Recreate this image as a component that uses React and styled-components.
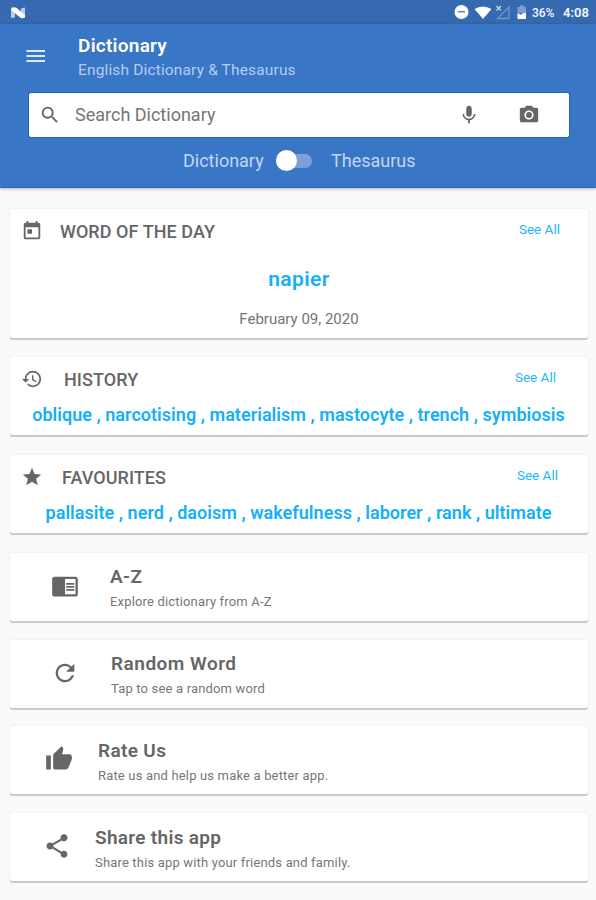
import React from "react";
import styled, { createGlobalStyle } from "styled-components";
import {
  MdSearch, MdMic, MdPhotoCamera, MdToday, MdHistory, MdStar,
  MdChromeReaderMode, MdRefresh, MdThumbUp, MdShare,
} from "react-icons/md";

const GlobalStyle = createGlobalStyle`
  * { box-sizing: border-box; }
  body { margin: 0; background: #fafafa; font-family: Roboto, sans-serif; color: #666; }
`;

const Screen = styled.div`
  width: 596px;
  height: 900px;
  overflow: hidden;
  background: #fafafa;
`;

const StatusBar = styled.div`
  height: 24px;
  padding: 2px 6px 0 11px;
  display: flex;
  align-items: center;
  justify-content: space-between;
  background: #356ab1;
  color: #f4f8fd;
`;

const StatusIcons = styled.div`
  display: flex;
  align-items: center;
  svg { display: block; flex: none; }
`;

const Battery = styled.span`
  margin-left: 5px;
  width: 24px;
  font-size: 12px;
  font-weight: 500;
  line-height: 14px;
  letter-spacing: -0.1px;
`;

const Clock = styled.span`
  margin-left: 7px;
  width: 27px;
  white-space: nowrap;
  font-size: 13px;
  font-weight: 600;
  line-height: 14px;
`;

const Header = styled.header`
  height: 164px;
  background: #3a76c6;
  box-shadow: 0 1px 3px rgba(0, 0, 0, 0.28);
  border-bottom: 1px solid #2c69bb;
`;

const TitleRow = styled.div`
  display: flex;
  height: 69px;
  padding-left: 26px;
`;

const MenuIcon = styled.svg`
  display: block;
  margin-top: 25px;
  width: 20px;
  height: 14px;
`;

const Titles = styled.div`
  margin: 11px 0 0 32px;
`;

const Title = styled.h1`
  margin: 0;
  font-size: 19px;
  line-height: 22px;
  font-weight: 600;
  color: #fff;
  letter-spacing: 0.25px;
`;

const Subtitle = styled.div`
  margin-top: 4px;
  font-size: 15.5px;
  line-height: 18px;
  color: #b4cdf0;
  letter-spacing: 0.15px;
`;

const SearchBox = styled.div`
  display: flex;
  align-items: center;
  width: 540px;
  height: 44px;
  margin-left: 29px;
  padding: 0 29px 0 10px;
  background: #fff;
  border-radius: 2px;
  box-shadow: 0 0 1px 1px #1f66bd;
  color: #666;
  svg { display: block; flex: none; }
`;

const Placeholder = styled.span`
  flex: 1;
  margin-left: 14px;
  font-size: 18px;
  line-height: 22px;
  color: #757575;
`;

const MicSlot = styled.span`
  margin-right: 38px;
`;

const ModeRow = styled.div`
  display: flex;
  align-items: center;
  height: 47px;
  padding-left: 183px;
  font-size: 18px;
  color: #c0d6f4;
`;

const ModeLabel = styled.span`
  width: ${(p) => p.$width}px;
  white-space: nowrap;
`;

const Switch = styled.span`
  display: flex;
  align-items: center;
  width: 36px;
  height: 14px;
  margin: 0 19px 0 12px;
  border-radius: 7px;
  background: #7f9fdb;
`;

const Thumb = styled.span`
  width: 21px;
  height: 21px;
  flex: none;
  border-radius: 50%;
  background: #fff;
`;

const CardList = styled.main`
  display: flex;
  flex-direction: column;
  padding: 21px 8px 0 10px;
`;

const Card = styled.section`
  height: ${(p) => p.$height}px;
  margin-bottom: ${(p) => p.$gap}px;
  border-radius: 2px;
  background: #fff;
  box-shadow: 0 2px 1px rgba(0, 0, 0, 0.19), 0 0 2px rgba(0, 0, 0, 0.1);
`;

const CardHead = styled.div`
  display: flex;
  height: 44px;
  padding: 11px ${(p) => p.$right}px 0 11px;
  svg { display: block; flex: none; }
`;

const CardTitle = styled.h2`
  flex: 1;
  margin: 1px 0 0 ${(p) => p.$left}px;
  font-size: 18px;
  line-height: 22px;
  font-weight: 500;
  letter-spacing: 0.06px;
`;

const SeeAll = styled.a`
  margin-top: 1px;
  font-size: 13.5px;
  line-height: 17px;
  color: #1eb5fa;
`;

const DailyWord = styled.div`
  margin-top: 13px;
  text-align: center;
  font-size: 21px;
  line-height: 26px;
  font-weight: 600;
  color: #14b0fa;
  letter-spacing: 0.4px;
`;

const DateText = styled.div`
  margin-top: 18px;
  text-align: center;
  font-size: 15px;
  line-height: 18px;
  color: #757575;
`;

const WordList = styled.div`
  margin-top: 3px;
  padding-right: 1px;
  text-align: center;
  white-space: nowrap;
  font-size: 18px;
  line-height: 22px;
  font-weight: 600;
  color: #14b0fa;
  letter-spacing: 0.035px;
`;

const ActionCard = styled(Card)`
  display: flex;
`;

const ActionIcon = styled.div`
  display: flex;
  align-items: center;
  justify-content: center;
  width: ${(p) => p.$center * 2}px;
  height: 66px;
  flex: none;
  svg { display: block; }
`;

const ActionText = styled.div`
  margin: ${(p) => p.$top}px 0 0 ${(p) => p.$left}px;
`;

const ActionTitle = styled.h2`
  margin: 0;
  font-size: 19px;
  line-height: 24px;
  font-weight: 600;
  letter-spacing: ${(p) => p.$spacing}px;
`;

const ActionNote = styled.div`
  margin-top: 4px;
  font-size: 13px;
  line-height: 18px;
  color: #777;
  letter-spacing: 0.17px;
`;

const lists = [
  { title: "HISTORY", Icon: MdHistory, left: 21, right: 32, gap: 20, words: "oblique , narcotising , materialism , mastocyte , trench , symbiosis" },
  { title: "FAVOURITES", Icon: MdStar, left: 19, right: 30, gap: 20, words: "pallasite , nerd , daoism , wakefulness , laborer , rank , ultimate" },
];

const actions = [
  { title: "A-Z", note: "Explore dictionary from A-Z", Icon: MdChromeReaderMode, center: 55, left: -10, top: 12, gap: 19, spacing: 0.4 },
  { title: "Random Word", note: "Tap to see a random word", Icon: MdRefresh, center: 55, left: -9, top: 12, gap: 18, spacing: 0.5 },
  { title: "Rate Us", note: "Rate us and help us make a better app.", Icon: MdThumbUp, center: 49, left: -10, top: 13, gap: 19, spacing: 0.35 },
  { title: "Share this app", note: "Share this app with your friends and family.", Icon: MdShare, center: 47, left: -9, top: 13, gap: 0, spacing: 0.3 },
];

export default function App() {
  return (
    <Screen>
      <GlobalStyle />
      <StatusBar>
        <svg width="15" height="12" viewBox="0 0 15 12">
          <path d="M0 1.500l4-1v10l-4 .5zM10 1.500l4-1v9.500l-4 1z" fill="#b7cdec" />
          <path d="M.5 .5h4.500l9 7.500v2.500l-3.500 1L.5 3.500z" fill="#fff" />
        </svg>
        <StatusIcons>
          <svg width="73" height="16" viewBox="0 0 73 16">
            <circle cx="7.500" cy="7" r="7" fill="#fff" />
            <path d="M4 6.700h7" stroke="#5c87c1" strokeWidth="1.600" />
            <path d="M20.500 4Q29-1.200 37.500 4L29 14z" fill="#fff" />
            <path d="M43.500 13.500h11.500v-11.500z" fill="none" stroke="#6f97cf" strokeWidth="1.300" />
            <path d="M42.500 1l4.500 4.500m0-4.500l-4.500 4.500" stroke="#c5d7ef" strokeWidth="1.300" />
            <path d="M66 .5h4v1.500h2v6h-8.500V2H66z" fill="#7c9fd0" />
            <path d="M63.500 8l3 1.800 3-1.800H72v6h-8.500z" fill="#fff" />
          </svg>
          <Battery>36%</Battery>
          <Clock>4:08</Clock>
        </StatusIcons>
      </StatusBar>
      <Header>
        <TitleRow>
          <MenuIcon viewBox="0 0 20 14">
            <path d="M.5 2h18.500M.5 7h18.500M.5 12h18.500" stroke="#dceafb" strokeWidth="2" />
          </MenuIcon>
          <Titles>
            <Title>Dictionary</Title>
            <Subtitle>English Dictionary &amp; Thesaurus</Subtitle>
          </Titles>
        </TitleRow>
        <SearchBox>
          <MdSearch size={22} />
          <Placeholder>Search Dictionary</Placeholder>
          <MicSlot><MdMic size={22} /></MicSlot>
          <MdPhotoCamera size={22} />
        </SearchBox>
        <ModeRow>
          <ModeLabel $width={81}>Dictionary</ModeLabel>
          <Switch><Thumb /></Switch>
          <ModeLabel $width={84}>Thesaurus</ModeLabel>
        </ModeRow>
      </Header>
      <CardList>
        <Card $height={129} $gap={19}>
          <CardHead $right={28}>
            <MdToday size={22} />
            <CardTitle $left={17}>WORD OF THE DAY</CardTitle>
            <SeeAll>See All</SeeAll>
          </CardHead>
          <DailyWord>napier</DailyWord>
          <DateText>February 09, 2020</DateText>
        </Card>
        {lists.map(({ title, Icon, left, right, gap, words }) => (
          <Card key={title} $height={78} $gap={gap}>
            <CardHead $right={right}>
              <Icon size={22} />
              <CardTitle $left={left}>{title}</CardTitle>
              <SeeAll>See All</SeeAll>
            </CardHead>
            <WordList>{words}</WordList>
          </Card>
        ))}
        {actions.map(({ title, note, Icon, center, left, top, gap, spacing }) => (
          <ActionCard key={title} $height={68} $gap={gap}>
            <ActionIcon $center={center}><Icon size={28} /></ActionIcon>
            <ActionText $left={left} $top={top}>
              <ActionTitle $spacing={spacing}>{title}</ActionTitle>
              <ActionNote>{note}</ActionNote>
            </ActionText>
          </ActionCard>
        ))}
      </CardList>
    </Screen>
  );
}
